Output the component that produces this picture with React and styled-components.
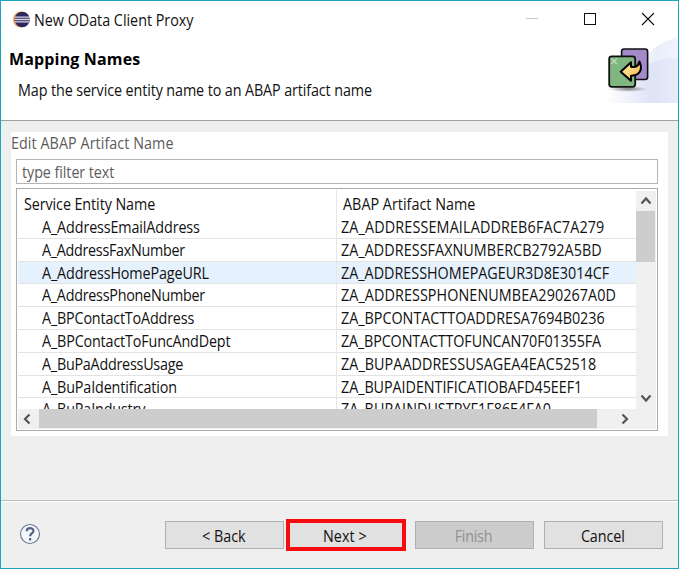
import React from 'react';
import styled, { createGlobalStyle } from 'styled-components';

const GlobalStyle = createGlobalStyle`
  *, *::before, *::after { box-sizing: border-box; }
  body { margin: 0; background: #fff; }
`;

const Window = styled.div`
  width: 679px;
  height: 569px;
  border: 1px solid #1aa3c3;
  background: #efefef;
  color: #111;
  font: 15.6px/20px 'Open Sans', 'Noto Sans', sans-serif;
  display: flex;
  flex-direction: column;
  overflow: hidden;
`;

const Label = styled.span`
  display: inline-block;
  white-space: nowrap;
  letter-spacing: ${p => p.$ls || 0}px;
  transform: scaleX(0.92);
  transform-origin: ${p => (p.$centered ? 'center' : 'left')};
`;

const TitleBar = styled.div`
  height: 36px;
  flex: none;
  display: flex;
  align-items: center;
  background: #fff;
  padding: 1px 23px 0 11px;
`;

const AppIcon = styled.svg`
  width: 19px;
  height: 19px;
  margin-right: 3px;
`;

const WindowControls = styled.svg`
  width: 130px;
  height: 14px;
  margin-left: auto;
  margin-top: -2px;
`;

const Banner = styled.header`
  height: 84px;
  flex: none;
  display: flex;
  justify-content: space-between;
  background: #fff;
  border-bottom: 1px solid #a0a0a0;
`;

const BannerText = styled.div`
  display: flex;
  flex-direction: column;
  gap: 11px;
  padding: 12px 0 0 8px;
`;

const Heading = styled.h1`
  margin: 0;
  font-size: 16px;
  line-height: 20px;
  font-weight: 700;
  color: #000;
  letter-spacing: 0.15px;
`;

const Description = styled.p`
  margin: 0;
  padding-left: 9px;
`;

const BannerArt = styled.svg`
  width: 77px;
  height: 66px;
  display: block;
`;

const Panel = styled.section`
  width: 657px;
  height: 304px;
  flex: none;
  margin: 11px 0 0 10px;
  padding: 1px 10px 0 5px;
  background: #fff;
  display: flex;
  flex-direction: column;
`;

const PanelTitle = styled.div`
  height: 26px;
  margin-left: -5px;
  flex: none;
  color: #5c5c5c;
`;

const FilterBox = styled.div`
  height: 25px;
  flex: none;
  border: 1px solid #b4b4b6;
  display: flex;
  align-items: center;
  padding-left: 5px;
  color: #5c5c5c;
`;

const TreeTable = styled.div`
  height: 243px;
  flex: none;
  margin-top: 4px;
  border: 1px solid #a9aab0;
  padding: 1px 1px 2px 1px;
  display: grid;
  grid-template-columns: 618px 1fr;
  grid-template-rows: 219px 20px;
`;

const Rows = styled.div`
  overflow: hidden;
`;

const Cells = styled.div`
  display: grid;
  grid-template-columns: 319px 1fr;
`;

const HeaderRow = styled(Cells)`
  height: 26px;
`;

const Row = styled(Cells)`
  height: 22.8px;
  background: ${p => (p.$selected ? '#e5f2fd' : '#fff')};
  border-bottom: 1px solid #e3e3e3;
`;

const Cell = styled.div`
  overflow: hidden;
  padding-left: ${p => p.$indent}px;
  padding-top: ${p => p.$top || 0}px;
  border-right: ${p => (p.$divider ? '1px solid #e6e6e6' : '0')};
  line-height: 22px;
`;

const VerticalBar = styled.div`
  grid-row: 1 / 3;
  grid-column: 2;
  background: #f0f0f0;
  margin-top: 1px;
  display: flex;
  flex-direction: column;
`;

const HorizontalBar = styled.div`
  background: #f0f0f0;
  display: flex;
`;

const ArrowBox = styled.svg`
  width: 20px;
  height: 20px;
  flex: none;
  margin-left: ${p => p.$offset || 0}px;
  margin-right: ${p => p.$after || 0}px;
  fill: none;
  stroke: #555;
  stroke-width: 2.2;
`;

const VerticalThumb = styled.div`
  height: 51px;
  width: 19px;
  background: #cdcdcd;
`;

const VerticalTrack = styled.div`
  height: 126px;
`;

const HorizontalThumb = styled.div`
  width: 558px;
  height: 19px;
  flex: none;
  background: #cdcdcd;
`;

const Footer = styled.footer`
  flex: none;
  margin-top: 64px;
  height: 68px;
  border-top: 1px solid #bdbdbd;
  box-shadow: inset 0 1px #fff;
  display: flex;
  align-items: flex-start;
  padding: 18px 15px 0 18px;
`;

const HelpIcon = styled.svg`
  width: 22px;
  height: 22px;
  flex: none;
  margin: 4px 124px 0 0;
`;

const Button = styled.button`
  flex: none;
  width: ${p => (p.$highlight ? 120 : 119)}px;
  height: ${p => (p.$highlight ? 32 : 28)}px;
  margin-top: ${p => (p.$highlight ? 0 : 2)}px;
  margin-right: ${p => p.$gap}px;
  padding: 1px 2px 0 0;
  border: ${p => (p.$highlight ? '4px solid #f80b0f' : '1px solid #b0b0b0')};
  background: ${p => (p.disabled ? '#cccccc' : '#e1e1e1')};
  color: ${p => (p.disabled ? '#929292' : '#111')};
  font: inherit;
`;

const entities = [
  ['A_AddressEmailAddress', -0.13, 'ZA_ADDRESSEMAILADDREB6FAC7A279', 0.16],
  ['A_AddressFaxNumber', -0.32, 'ZA_ADDRESSFAXNUMBERCB2792A5BD', 0.06],
  ['A_AddressHomePageURL', -0.14, 'ZA_ADDRESSHOMEPAGEUR3D8E3014CF', 0],
  ['A_AddressPhoneNumber', -0.28, 'ZA_ADDRESSPHONENUMBEA290267A0D', 0.09],
  ['A_BPContactToAddress', -0.19, 'ZA_BPCONTACTTOADDRESA7694B0236', -0.01],
  ['A_BPContactToFuncAndDept', -0.17, 'ZA_BPCONTACTTOFUNCAN70F01355FA', -0.16],
  ['A_BuPaAddressUsage', -0.26, 'ZA_BUPAADDRESSUSAGEA4EAC52518', 0.06],
  ['A_BuPaIdentification', -0.16, 'ZA_BUPAIDENTIFICATIOBAFD45EEF1', -0.06],
  ['A_BuPaIndustry', -0.16, 'ZA_BUPAINDUSTRYF1F86E4FA0', 0.02],
];

function EclipseLogo() {
  return (
    <AppIcon viewBox="0 0 19 19">
      <circle cx="9" cy="9.5" r="8" fill="#f2a054" />
      <circle cx="10.2" cy="9.5" r="7.7" fill="#2f285f" />
      <path d="M3 7.2h14.4M2.6 9.5h15.2M3 11.8h14.4" stroke="#d9d7e8" strokeWidth="1.3" />
    </AppIcon>
  );
}

function WizardArt() {
  return (
    <BannerArt viewBox="0 0 77 66">
      <defs>
        <linearGradient id="outer" x1="0" x2="1" y1="0" y2="0">
          <stop offset="0" stopColor="#fff" />
          <stop offset=".6" stopColor="#e9eefa" />
          <stop offset="1" stopColor="#f1f4fd" />
        </linearGradient>
        <linearGradient id="inner" x1="0" x2="1" y1="0" y2="0">
          <stop offset="0" stopColor="#fff" />
          <stop offset=".6" stopColor="#d9e0f5" />
          <stop offset="1" stopColor="#e4eafa" />
        </linearGradient>
        <linearGradient id="arrow" x1="0" x2="1" y1="0" y2="1">
          <stop offset="0" stopColor="#fff0b5" />
          <stop offset="1" stopColor="#f8b53d" />
        </linearGradient>
        <radialGradient id="shade">
          <stop offset="0" stopColor="#555" stopOpacity=".75" />
          <stop offset="1" stopColor="#777" stopOpacity="0" />
        </radialGradient>
      </defs>
      <path d="M26 66C33 26 50 7 77 0v66z" fill="url(#outer)" />
      <path d="M4 66C21 39 43 22 77 21v45z" fill="url(#inner)" opacity=".75" />
      <ellipse cx="27" cy="52" rx="20" ry="3" fill="url(#shade)" />
      <rect x="20.6" y="12" width="26" height="30.5" rx="2.5" fill="#a58acb" stroke="#111" strokeWidth="1.6" />
      <rect x="8.2" y="19.3" width="26" height="30.5" rx="2.5" fill="#80b680" stroke="#111" strokeWidth="1.8" />
      <path d="M13 24.3l-3-3M13 24.3l3-3M13 24.3l-3 3M13 24.3l3 3" stroke="#eef8ec" strokeWidth="1" />
      <path d="M19.7 34.7L30 25.2v4.6c4.4.8 7.6-1.2 8.4-5.3 3.7 7.8.5 14.4-8.4 14.2v5z" fill="url(#arrow)" stroke="#000" strokeWidth="2" strokeLinejoin="round" />
    </BannerArt>
  );
}

export default function App() {
  return (
    <>
      <GlobalStyle />
      <Window>
        <TitleBar>
          <EclipseLogo />
          <Label $ls={-0.02}>New OData Client Proxy</Label>
          <WindowControls viewBox="0 0 130 14" fill="none">
            <path d="M1 6.5h12" stroke="#c9c9c9" />
            <rect x="59.5" y="1.5" width="11" height="11" stroke="#111" />
            <path d="M117 1l12 12M129 1l-12 12" stroke="#111" strokeWidth="1.1" />
          </WindowControls>
        </TitleBar>
        <Banner>
          <BannerText>
            <Heading>Mapping Names</Heading>
            <Description><Label $ls={-0.12}>Map the service entity name to an ABAP artifact name</Label></Description>
          </BannerText>
          <WizardArt />
        </Banner>
        <Panel>
          <PanelTitle><Label $ls={0.06}>Edit ABAP Artifact Name</Label></PanelTitle>
          <FilterBox><Label $ls={-0.08}>type filter text</Label></FilterBox>
          <TreeTable>
            <Rows>
              <HeaderRow>
                <Cell $indent={5.5} $top={3} $divider><Label $ls={-0.1}>Service Entity Name</Label></Cell>
                <Cell $indent={6} $top={3}><Label $ls={0.02}>ABAP Artifact Name</Label></Cell>
              </HeaderRow>
              {entities.map(([name, nameLs, artifact, artifactLs], i) => (
                <Row key={name} $selected={i === 2}>
                  <Cell $indent={24} $divider><Label $ls={nameLs}>{name}</Label></Cell>
                  <Cell $indent={4}><Label $ls={artifactLs}>{artifact}</Label></Cell>
                </Row>
              ))}
            </Rows>
            <VerticalBar>
              <ArrowBox viewBox="0 0 20 20"><path d="M5.5 12.5l4.5-5 4.5 5" /></ArrowBox>
              <VerticalThumb />
              <VerticalTrack />
              <ArrowBox viewBox="0 0 20 20"><path d="M5.5 7.5l4.5 5 4.5-5" /></ArrowBox>
            </VerticalBar>
            <HorizontalBar>
              <ArrowBox viewBox="0 0 20 20" $after={1}><path d="M11.5 5.5l-4.5 4.5 4.5 4.5" /></ArrowBox>
              <HorizontalThumb />
              <ArrowBox viewBox="0 0 20 20" $offset={18}><path d="M7.5 5.5l4.5 4.5-4.5 4.5" /></ArrowBox>
            </HorizontalBar>
          </TreeTable>
        </Panel>
        <Footer>
          <HelpIcon viewBox="0 0 22 22" fill="none">
            <circle cx="11" cy="11" r="9.5" fill="#f6f7fa" stroke="#66758f" strokeWidth="1.1" />
            <path d="M7.7 8.3C7.8 4.2 14.6 4.2 14.4 8c-.1 2.5-3.3 2.5-3.3 5.2M11.1 15v2.4" stroke="#526487" strokeWidth="2.2" />
          </HelpIcon>
          <Button $gap={2}><Label $centered $ls={0.03}>&lt; Back</Label></Button>
          <Button $gap={9} $highlight><Label $centered $ls={0.1}>Next &gt;</Label></Button>
          <Button $gap={10} disabled><Label $centered $ls={-0.28}>Finish</Label></Button>
          <Button $gap={0}><Label $centered $ls={-0.1}>Cancel</Label></Button>
        </Footer>
      </Window>
    </>
  );
}
